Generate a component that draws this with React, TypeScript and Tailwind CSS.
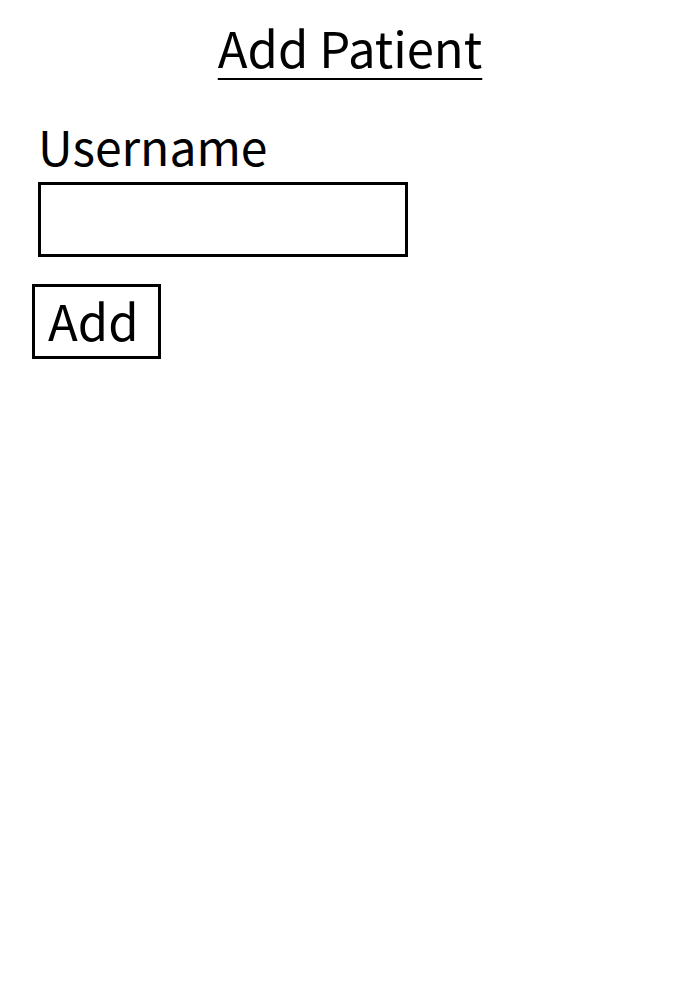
import React from "react";

export default function App() {
  return (
    <div className="bg-white min-h-screen text-black" style={{ fontFamily: '"Noto Sans CJK JP", "Noto Sans", sans-serif' }}>
      <h1 className="text-center text-[49px] leading-[62px] pt-[16px] font-normal">
        <span className="underline decoration-2 underline-offset-[10px]">Add Patient</span>
      </h1>
      <div className="px-[38px] pt-[36px]">
        <label className="block text-[48px] leading-[62px]">Username</label>
        <input className="block w-[370px] h-[75px] border-[3px] border-black mt-[6px] outline-none" />
      </div>
      <div className="px-[32px] pt-[27px]">
        <button className="flex items-center border-[3px] border-black pl-[13px] pr-[19px] pb-[5px] h-[75px] text-[49px] leading-none">Add</button>
      </div>
    </div>
  );
}
